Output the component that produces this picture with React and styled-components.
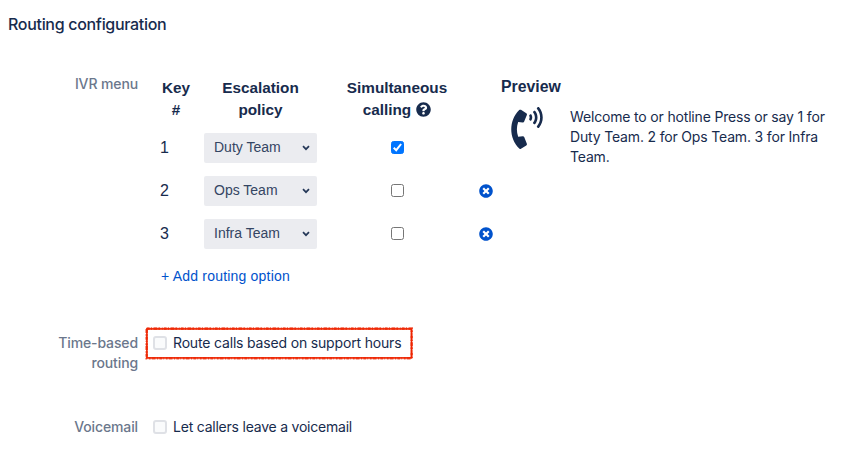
import React from "react";
import styled, { createGlobalStyle } from "styled-components";
import { FaPhoneVolume, FaQuestionCircle, FaTimesCircle } from "react-icons/fa";

const NAVY = "#172b4d";
const BLUE = "#0052cc";
const SANS = `"Liberation Sans", Arial, sans-serif`;
const INTER = `Inter, sans-serif`;

const GlobalStyle = createGlobalStyle`
  *, *::before, *::after { box-sizing: border-box; }
  body {
    margin: 0;
    background: #fff;
    color: ${NAVY};
    font-family: ${INTER};
    font-size: 14px;
    line-height: 20px;
    overflow: hidden;
  }
`;

const Page = styled.main`
  width: 865px;
  height: 464px;
  padding-top: 12px;
`;

const Title = styled.h1`
  margin: 0 0 38px 8px;
  font-size: 16px;
  line-height: 24px;
  font-weight: 500;
  letter-spacing: -0.31px;
`;

const Section = styled.section`
  display: grid;
  grid-template-columns: 88px 1fr;
  column-gap: 15px;
  padding-left: 50px;
  height: ${(p) => p.$height}px;
`;

const SectionLabel = styled.div`
  color: #6b778c;
  font-weight: 500;
  text-align: right;
  white-space: pre-line;
  letter-spacing: -0.12px;
`;

const MenuBody = styled.div`
  display: grid;
  grid-template-columns: 348px 1fr;
`;

const Table = styled.div`
  display: grid;
  grid-template-columns: 46px 123px 150px 27px;
  grid-template-rows: 49px repeat(3, 43px);
  align-items: center;
  padding-top: 3px;
`;

const HeaderCell = styled.div`
  align-self: start;
  font: 700 15.3px/22px ${SANS};
  text-align: center;
  white-space: pre-line;
`;

const HelpIcon = styled(FaQuestionCircle)`
  width: 15px;
  height: 15px;
  margin-left: 5px;
  vertical-align: -2px;
`;

const KeyCell = styled.div`
  padding-left: 7px;
  font: 400 16px/22px ${SANS};
`;

const Select = styled.button`
  display: flex;
  align-items: center;
  justify-content: space-between;
  width: 113px;
  height: 30px;
  margin-left: 5px;
  padding: 0 7px 2px 10px;
  border: 0;
  border-radius: 2px;
  background: #ebecf0;
  color: #344563;
  font: 400 14px/20px ${SANS};
  letter-spacing: 0;
  svg { margin-top: 3px; }
`;

const CheckCell = styled.div`
  display: flex;
  justify-content: center;
`;

const Box = styled.span`
  display: grid;
  place-items: center;
  flex: none;
  width: 13px;
  height: 13px;
  border-radius: 2.5px;
  border: 1px solid ${(p) => (p.$checked ? "#0075ff" : "#767676")};
  background: ${(p) => (p.$checked ? "#0075ff" : "#fff")};
`;

const RemoveButton = styled.button`
  display: flex;
  justify-content: center;
  padding: 0;
  border: 0;
  background: none;
  color: ${BLUE};
  svg { width: 14px; height: 14px; margin-top: 1px; }
`;

const AddLink = styled.a`
  grid-column: 1 / -1;
  align-self: start;
  padding: 11px 0 0 8px;
  color: ${BLUE};
  font: 400 14px/20px ${SANS};
  letter-spacing: 0.2px;
`;

const Preview = styled.div`
  display: grid;
  grid-template-columns: 69px 262px;
  grid-template-rows: 33px auto;
  align-items: start;
`;

const PreviewTitle = styled(HeaderCell)`
  grid-column: 1 / -1;
  padding-top: 2px;
  font-size: 15.8px;
  text-align: left;
`;

const PhoneIcon = styled(FaPhoneVolume)`
  width: 32px;
  height: 42px;
  margin-left: 10px;
`;

const Message = styled.p`
  margin: 0;
  white-space: pre-line;
  letter-spacing: -0.17px;
`;

const Option = styled.label`
  position: relative;
  display: flex;
  align-items: center;
  gap: 6px;
  justify-self: start;
  height: 20px;
  letter-spacing: ${(p) => p.$tracking}px;
`;

const SoftBox = styled.span`
  width: 14px;
  height: 14px;
  border: 2px solid #dfe1e6;
  border-radius: 3px;
  background: #fafbfc;
`;

const Outline = styled.svg`
  position: absolute;
  left: -8px;
  top: -6px;
  width: 269px;
  height: 34px;
  pointer-events: none;
`;

/* Marker stroke: a thin solid core with an uneven, broken edge over it. */
function MarkerOutline() {
  return (
    <Outline viewBox="0 0 269 34" fill="none" stroke="#ee2400">
      <rect x="1.9" y="1.9" width="264.6" height="29" strokeWidth="1.6" />
      <rect
        x="1.7"
        y="1.6"
        width="265"
        height="29.6"
        strokeWidth="2.6"
        strokeOpacity="0.75"
        strokeDasharray="3 1 1.5 1.2 4 0.9 2 1.4 1 1"
      />
    </Outline>
  );
}

function Chevron() {
  return (
    <svg width="8" height="6" viewBox="0 0 8 6" fill="none">
      <path d="M1 1.2 4 4.2 7 1.2" stroke="#253858" strokeWidth="1.7" />
    </svg>
  );
}

function CheckBox({ checked }) {
  return (
    <Box $checked={checked}>
      {checked && (
        <svg width="11" height="11" viewBox="0 0 11 11" fill="none">
          <path d="M1.7 5.8 4.2 8.2 9.1 2" stroke="#fff" strokeWidth="2" />
        </svg>
      )}
    </Box>
  );
}

const ROUTES = [
  { key: 1, team: "Duty Team", simultaneous: true },
  { key: 2, team: "Ops Team", removable: true },
  { key: 3, team: "Infra Team", removable: true },
];

export default function App() {
  return (
    <Page>
      <GlobalStyle />
      <Title>Routing configuration</Title>
      <Section $height={259}>
        <SectionLabel>IVR menu</SectionLabel>
        <MenuBody>
          <Table>
            <HeaderCell>{"Key\n#"}</HeaderCell>
            <HeaderCell>{"Escalation\npolicy"}</HeaderCell>
            <HeaderCell>
              {"Simultaneous\ncalling"}
              <HelpIcon />
            </HeaderCell>
            <span />
            {ROUTES.map((r) => (
              <React.Fragment key={r.key}>
                <KeyCell>{r.key}</KeyCell>
                <Select>
                  {r.team}
                  <Chevron />
                </Select>
                <CheckCell>
                  <CheckBox checked={r.simultaneous} />
                </CheckCell>
                {r.removable ? (
                  <RemoveButton aria-label="Remove">
                    <FaTimesCircle />
                  </RemoveButton>
                ) : (
                  <span />
                )}
              </React.Fragment>
            ))}
            <AddLink>+ Add routing option</AddLink>
          </Table>
          <Preview>
            <PreviewTitle>Preview</PreviewTitle>
            <PhoneIcon />
            <Message>
              {"Welcome to or hotline Press or say 1 for\nDuty Team. 2 for Ops Team. 3 for Infra\nTeam."}
            </Message>
          </Preview>
        </MenuBody>
      </Section>
      <Section $height={84}>
        <SectionLabel>{"Time-based\nrouting"}</SectionLabel>
        <Option $tracking={-0.17}>
          <SoftBox />
          Route calls based on support hours
          <MarkerOutline />
        </Option>
      </Section>
      <Section $height={40}>
        <SectionLabel>Voicemail</SectionLabel>
        <Option $tracking={-0.22}>
          <SoftBox />
          Let callers leave a voicemail
        </Option>
      </Section>
    </Page>
  );
}
